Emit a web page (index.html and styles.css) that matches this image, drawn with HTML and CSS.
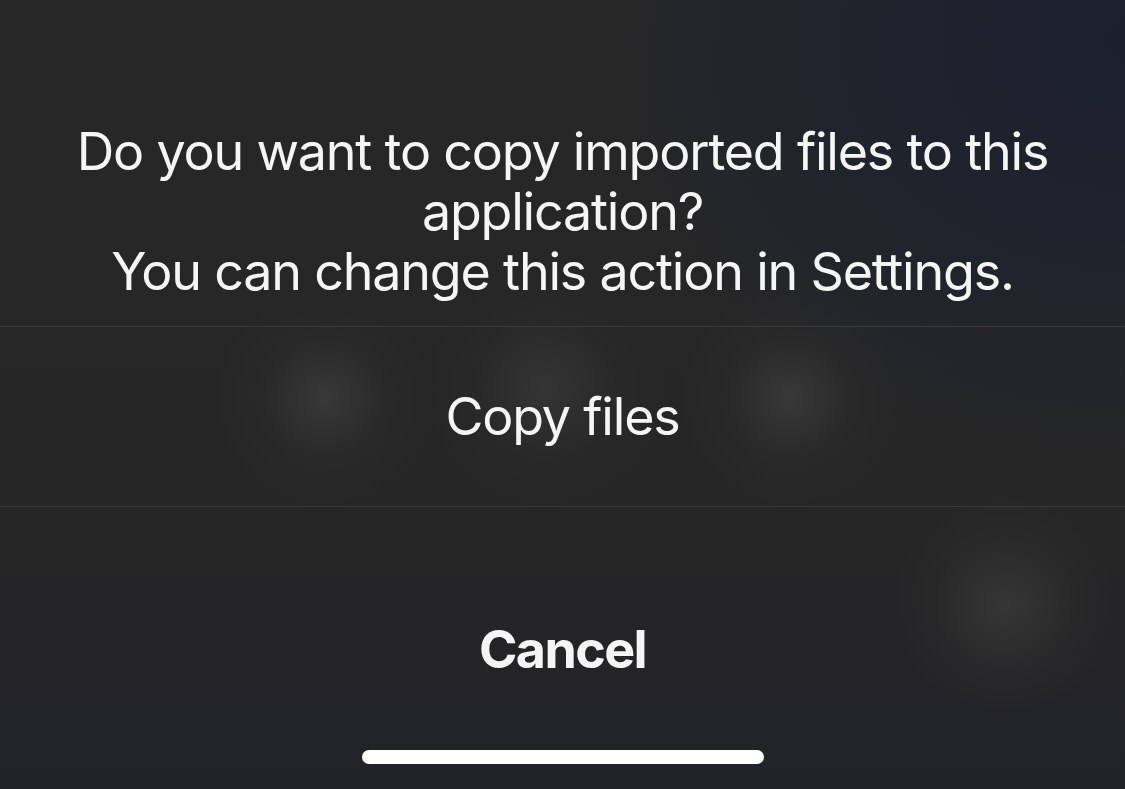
FILE: index.html
```html
<!DOCTYPE html>
<html lang="en">
<head>
    <meta charset="UTF-8">
    <meta name="viewport" content="width=device-width, initial-scale=1.0">
    <title>Copy imported files</title>
    <link rel="stylesheet" href="styles.css">
</head>
<body>
    <div id="sheet">
        <div class="message">
            <p>Do you want to copy imported files to this application?<br>You can change this action in Settings.</p>
        </div>
        <div class="action">Copy files</div>
        <div class="cancel">
            <div class="cancel-label">Cancel</div>
            <div class="home-bar"></div>
        </div>
    </div>
</body>
</html>
```

FILE: styles.css
```css
html, body {
    height: 100%;
}
body {
    margin: 0;
    overflow: hidden;
    font-family: Inter, "Noto Sans", sans-serif;
    color: #f5f5f5;
    background-color: #262626;
    background-image:
        radial-gradient(circle at 325px 398px, rgba(64,64,64,0.7) 0, rgba(44,44,44,0.5) 60px, rgba(38,38,38,0) 110px),
        radial-gradient(circle at 545px 388px, rgba(62,62,62,0.6) 0, rgba(44,44,44,0.4) 70px, rgba(38,38,38,0) 120px),
        radial-gradient(circle at 790px 398px, rgba(64,64,64,0.7) 0, rgba(44,44,44,0.5) 60px, rgba(38,38,38,0) 110px),
        radial-gradient(circle at 1005px 605px, rgba(58,58,58,0.8) 0, rgba(44,44,44,0.5) 70px, rgba(38,38,38,0) 110px),
        radial-gradient(ellipse 520px 420px at 1125px 40px, rgba(26,32,46,1) 0, rgba(28,34,46,0.7) 55%, rgba(38,38,38,0) 100%),
        linear-gradient(180deg, #272727 0, #262626 500px, #222327 789px);
}
#sheet {
    display: flex;
    flex-direction: column;
    height: 100%;
}
.message {
    padding: 122px 20px 24px;
    border-bottom: 1px solid #3c3c3c;
    text-align: center;
}
.message p {
    margin: 0;
    font-size: 52px;
    line-height: 60px;
    letter-spacing: -1.2px;
}
.action {
    height: 179px;
    display: flex;
    align-items: center;
    justify-content: center;
    font-size: 52px;
    letter-spacing: -1.2px;
    border-bottom: 1px solid #3a3a3a;
}
.cancel {
    display: flex;
    flex-direction: column;
    align-items: center;
}
.cancel-label {
    margin-top: 113px;
    font-size: 52px;
    line-height: 60px;
    font-weight: 700;
    letter-spacing: -1.6px;
}
.home-bar {
    margin-top: 70px;
    width: 402px;
    height: 14px;
    border-radius: 7px;
    background: #ffffff;
}
```
